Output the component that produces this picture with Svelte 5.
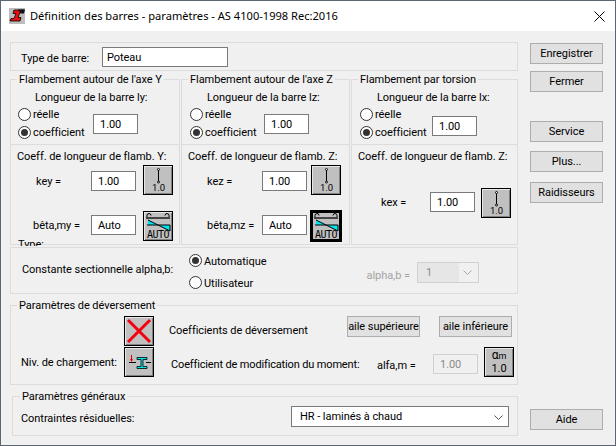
<script>
  const sideTop = ['Enregistrer', 'Fermer'];
  const sideMid = ['Service', 'Plus...', 'Raidisseurs'];
</script>

{#snippet kIcon()}
  <svg width="28" height="28" viewBox="0 0 28 28" aria-hidden="true">
    <g fill="none" stroke="#000">
      <path d="M14.5 4V16" />
      <circle cx="14.5" cy="3.5" r="1" fill="#fff" />
      <circle cx="14.5" cy="16" r="1" fill="#fff" />
    </g>
  </svg>
  <span class="k-num">1.0</span>
{/snippet}

{#snippet autoIcon()}
  <svg width="28" height="28" viewBox="0 0 28 28" aria-hidden="true">
    <g fill="none" stroke="#000">
      <path d="M2 6H26" stroke-width="1.3" />
      <path d="M3 5V3.5A2 2 0 0 1 7 3.5" />
      <path d="M21 3.5A2 2 0 0 1 25 3.5V5" />
    </g>
    <path d="M4 8V13H15Z M15 13H26V19Z" fill="#00e5ee" />
    <path d="M4 8L26 19V13H3" stroke="#000" fill="none" />
  </svg>
  <span class="auto-num">AUTO</span>
{/snippet}

<div class="window">
  <header class="titlebar">
    <svg class="logo" width="18" height="16" viewBox="0 0 18 16" aria-hidden="true">
      <rect width="16" height="16" fill="#bdbdbd" />
      <path d="M5 2H15L14 4.5H11L9 9.5L12 9.5L11 13H1L2 10.5H5L7 5.5H4Z" fill="#e81010" stroke="#000" stroke-width=".8" />
      <path d="M9 1.5L16 1.5L15 5.5L11.5 5.5" fill="#111" />
    </svg>
    <span class="title">Définition des barres - paramètres - AS 4100-1998 Rec:2016</span>
    <svg class="close" width="11" height="11" viewBox="0 0 11 11" aria-hidden="true">
      <path d="M.5.5L10.5 10.5M10.5.5L.5 10.5" stroke="#000" fill="none" />
    </svg>
  </header>

  <div class="content">
    <main class="main">
      <section class="box g-type">
        <span class="type-label">Type de barre:</span>
        <input class="field type-field" value="Poteau" readonly />
      </section>

      <section class="g-buck">
        <div class="col">
          <div class="box upper">
            <span class="legend">Flambement autour de l'axe Y</span>
            <div class="len len-a">Longueur de la barre ly:</div>
            <div class="choice ch-a">
              <div class="radios">
                <label class="radio"><i></i>réelle</label>
                <label class="radio on"><i></i>coefficient</label>
              </div>
              <input class="field num num-a" value="1.00" readonly />
            </div>
          </div>
          <div class="box lower">
            <div class="coef-title">Coeff. de longueur de flamb. Y:</div>
            <div class="krow">
              <span class="lbl l-key">key =</span>
              <input class="field num" value="1.00" readonly />
              <span class="tool k">{@render kIcon()}</span>
            </div>
            <div class="brow">
              <span class="lbl l-beta">bêta,my =</span>
              <input class="field num" value="Auto" readonly />
              <span class="tool auto">{@render autoIcon()}</span>
            </div>
          </div>
        </div>

        <div class="col">
          <div class="box upper">
            <span class="legend l2">Flambement autour de l'axe Z</span>
            <div class="len len-b">Longueur de la barre lz:</div>
            <div class="choice ch-b">
              <div class="radios">
                <label class="radio"><i></i>réelle</label>
                <label class="radio on"><i></i>coefficient</label>
              </div>
              <input class="field num num-b" value="1.00" readonly />
            </div>
          </div>
          <div class="box lower">
            <div class="coef-title">Coeff. de longueur de flamb. Z:</div>
            <div class="krow">
              <span class="lbl l-kez">kez =</span>
              <input class="field num" value="1.00" readonly />
              <span class="tool k k2">{@render kIcon()}</span>
            </div>
            <div class="brow b2">
              <span class="lbl l-betz">bêta,mz =</span>
              <input class="field num" value="Auto" readonly />
              <span class="tool auto focus">{@render autoIcon()}</span>
            </div>
          </div>
        </div>

        <div class="col">
          <div class="box upper">
            <span class="legend l2">Flambement par torsion</span>
            <div class="len len-c">Longueur de la barre lx:</div>
            <div class="choice ch-c">
              <div class="radios">
                <label class="radio"><i></i>réelle</label>
                <label class="radio on"><i></i>coefficient</label>
              </div>
              <input class="field num num-c" value="1.00" readonly />
            </div>
          </div>
          <div class="box lower">
            <div class="coef-title">Coeff. de longueur de flamb. Z:</div>
            <div class="krow kx">
              <span class="lbl l-kex">kex =</span>
              <input class="field num" value="1.00" readonly />
              <span class="tool k k3">{@render kIcon()}</span>
            </div>
          </div>
        </div>
      </section>

      <section class="box g-sect">
        <span class="type-over">Type:</span>
        <span class="sect-label">Constante sectionnelle alpha,b:</span>
        <div class="radios sect-radios">
          <label class="radio on tall"><i></i>Automatique</label>
          <label class="radio tall"><i></i>Utilisateur</label>
        </div>
        <span class="alpha-label">alpha,b =</span>
        <div class="dis-select">
          <span class="dis-value">1</span>
          <svg width="9" height="5" viewBox="0 0 9 5" aria-hidden="true"><path d="M.5.5L4.5 4.5L8.5.5" fill="none" stroke="#a6a6a6" /></svg>
        </div>
      </section>

      <section class="box g-dev">
        <span class="legend">Paramètres de déversement</span>
        <div class="dev-row first">
          <span class="tool cross">
            <svg width="28" height="28" viewBox="0 0 28 28" aria-hidden="true"><path d="M3 3L25 25M25 3L3 25" stroke="#f5000f" stroke-width="3" fill="none" /></svg>
          </span>
          <span class="coef-dev">Coefficients de déversement</span>
          <button class="btn wing w1">aile supérieure</button>
          <button class="btn wing w2">aile inférieure</button>
        </div>
        <div class="dev-row">
          <span class="niv">Niv. de chargement:</span>
          <span class="tool beam">
            <svg width="28" height="28" viewBox="0 0 28 28" aria-hidden="true">
              <path d="M4 14.5H11M21 14.5H26" stroke="#000" fill="none" />
              <path d="M6.5 7V12" stroke="#e00000" fill="none" />
              <path d="M5 11L6.5 14L8 11Z" fill="#e00000" />
              <path d="M12 9.5H22V11.5H18V18.5H22V20.5H12V18.5H16V11.5H12Z" fill="#00e5ee" stroke="#000" stroke-width=".8" />
            </svg>
          </span>
          <span class="mod">Coefficient de modification du moment:</span>
          <span class="alfa">alfa,m =</span>
          <input class="field num off" value="1.00" readonly />
          <span class="tool am"><span class="am-top">α<small>m</small></span><span class="am-bot">1.0</span></span>
        </div>
      </section>

      <section class="box g-gen">
        <span class="legend l3">Paramètres généraux</span>
        <span class="res">Contraintes résiduelles:</span>
        <div class="select">
          <span>HR - laminés à chaud</span>
          <svg width="9" height="5" viewBox="0 0 9 5" aria-hidden="true"><path d="M.5.5L4.5 4.5L8.5.5" fill="none" stroke="#555" /></svg>
        </div>
      </section>
    </main>

    <aside class="side">
      {#each sideTop as b}<button class="btn sbtn">{b}</button>{/each}
      <div class="gap"></div>
      {#each sideMid as b}<button class="btn sbtn">{b}</button>{/each}
      <button class="btn sbtn help">Aide</button>
    </aside>
  </div>
</div>

<style>
  :global(body) { margin: 0; }
  .window {
    width: 616px; height: 446px; box-sizing: border-box;
    border: 1px solid #5b6675; background: #f0f0f0;
    display: flex; flex-direction: column;
    font: 11px/14px Roboto, "Noto Sans", sans-serif; letter-spacing: -.05px;
    color: #000; overflow: hidden;
  }
  .titlebar { height: 30px; background: #fff; display: flex; align-items: center; flex: none; }
  .logo { margin-left: 8px; }
  .title { margin-left: 3px; font: 11.1px/14px "Noto Sans", sans-serif; letter-spacing: 0; }
  .close { margin-left: auto; margin-right: 10px; }
  .content { flex: 1; display: flex; min-height: 0; }
  .main { margin-left: 9px; width: 508px; padding-top: 11px; flex: none; }
  .box { border: 1px solid #dcdcdc; box-sizing: border-box; position: relative; }
  .legend {
    position: absolute; left: 6px; top: -7px; padding: 0 2px; background: #f0f0f0; white-space: nowrap;
  }
  .l2 { left: 6px; }
  .l3 { left: 7px; }
  .field {
    box-sizing: border-box; border: 1px solid #7a7a7a; background: #fff; margin: 0;
    font: inherit; letter-spacing: inherit; color: #000; padding: 1px 6px 0; outline: none; display: block;
  }
  .num { width: 45px; height: 20px; }
  .g-type { height: 29px; display: flex; align-items: flex-start; }
  .type-label { margin-left: 10px; width: 81px; margin-top: 9px; }
  .type-field { width: 126px; height: 20px; margin-top: 4px; padding: 0 4px; }
  .g-buck { margin-top: 8px; display: grid; grid-template-columns: 170px 169px 167px; column-gap: 1px; }
  .col { display: flex; flex-direction: column; }
  .upper { height: 66px; padding-top: 11px; }
  .lower { height: 100px; border-top: 0; padding-top: 5px; }
  .len { white-space: nowrap; }
  .len-a { margin-left: 24px; }
  .len-b { margin-left: 25px; }
  .len-c { margin-left: 25px; }
  .choice { display: flex; margin-top: 1px; }
  .ch-a { margin-left: 7px; }
  .ch-b { margin-left: 8px; }
  .ch-c { margin-left: 8px; }
  .radios { display: flex; flex-direction: column; width: 74px; flex: none; }
  .radio { display: flex; align-items: center; height: 18px; white-space: nowrap; box-sizing: content-box; padding-top: 2px; margin-top: -2px; }
  .radio i {
    width: 13px; height: 13px; border-radius: 50%; border: 1px solid #333; background: #fff;
    box-sizing: border-box; margin-right: 2px; margin-top: -2px; display: grid; place-items: center; flex: none;
  }
  .radio.on i::after { content: ""; width: 7px; height: 7px; border-radius: 50%; background: #333; }
  .num-a { margin: 8px 0 0 1px; }
  .num-b { margin: 8px 0 0 0; }
  .num-c { margin: 10px 0 0 -2px; }
  .coef-title { margin-left: 6px; white-space: nowrap; height: 14px; }
  .lbl { white-space: nowrap; display: block; flex: none; }
  .krow { display: flex; align-items: flex-start; margin-top: 1px; height: 30px; }
  .krow .field { margin-top: 6px; }
  .krow .lbl { line-height: 20px; margin-top: 7px; }
  .brow { display: flex; align-items: flex-start; margin-top: 16px; }
  .brow .lbl { line-height: 20px; margin-top: 5px; }
  .brow .field { margin-top: 4px; }
  .l-key { margin-left: 25px; width: 55px; }
  .l-beta { margin-left: 22px; width: 58px; }
  .l-kez { margin-left: 25px; width: 55px; }
  .l-betz { margin-left: 25px; width: 55px; }
  .krow.kx { margin-top: 24px; }
  .krow.kx .field { margin-top: 4px; }
  .krow.kx .lbl { margin-top: 5px; }
  .l-kex { margin-left: 29px; width: 49px; }
  .tool {
    width: 30px; height: 30px; box-sizing: border-box; background: #c0c0c0; flex: none;
    border: 1px solid #000; box-shadow: inset 1px 1px 0 #e6e6e6, inset -1px -1px 0 #808080;
    position: relative; display: block; overflow: hidden;
  }
  .tool svg { display: block; }
  .k { margin-left: 7px; }
  .k2 { margin-left: 4px; }
  .k3 { margin-left: 6px; }
  .k-num { position: absolute; left: 1px; right: 0; bottom: 1px; text-align: center; font-size: 9.5px; line-height: 10px; }
  .auto { margin-left: 7px; }
  .focus { width: 32px; height: 32px; border-width: 2px; margin-left: 3px; margin-top: -1px; box-shadow: inset 0 0 0 1px #000; }
  .auto-num { position: absolute; left: 0; right: 0; bottom: 0; text-align: center; font: 10px/10px "DejaVu Sans Mono", monospace; letter-spacing: -.5px; }
  .g-sect { margin-top: 2px; height: 47px; display: flex; align-items: center; }
  .type-over { position: absolute; left: 7px; top: -10px; height: 8px; overflow: hidden; line-height: 13px; }
  .sect-label { margin-left: 11px; width: 167px; white-space: nowrap; margin-top: -1px; }
  .sect-radios { margin-top: 4px; }
  .tall { height: 22px; }
  .alpha-label { margin-left: auto; color: #a3a3a3; margin-top: 11px; }
  .dis-select {
    width: 62px; height: 21px; box-sizing: border-box; border: 1px solid #d0d0d0; margin: 11px 38px 7px 7px;
    display: flex; align-items: center; background: linear-gradient(to right, #e6e6e6 41px, #f0f0f0 41px);
    color: #8a8a8a; padding: 0 6px 0 8px; justify-content: space-between;
  }
  .g-dev { margin-top: 11px; height: 80px; padding-top: 10px; }
  .dev-row { display: flex; align-items: center; height: 31px; }
  .dev-row.first { align-items: flex-start; height: 31px; }
  .first .tool { margin-left: 113px; }
  .coef-dev { margin-left: 15px; width: 178px; white-space: nowrap; margin-top: 8px; }
  .btn {
    box-sizing: border-box; border: 1px solid #adadad; background: #e1e1e1; padding: 0; margin: 0;
    font: inherit; letter-spacing: inherit; color: #000; white-space: nowrap; display: block; overflow: hidden;
  }
  .wing { width: 73px; height: 21px; }
  .w2 { margin-left: 19px; }
  .niv { margin-left: 10px; width: 103px; white-space: nowrap; margin-top: 1px; }
  .beam { align-self: flex-start; }
  .mod { margin-left: 17px; width: 206px; white-space: nowrap; margin-top: 5px; letter-spacing: -.15px; }
  .alfa { white-space: nowrap; width: 56px; margin-top: 6px; }
  .off { border-color: #d0d0d0; background: #f0f0f0; color: #8a8a8a; margin-top: 2px; width: 45px; }
  .am {
    margin-left: 6px; align-self: flex-start; text-align: center;
    display: flex; flex-direction: column; font-size: 11px;
  }
  .am-top { display: block; height: 14px; line-height: 14px; font-size: 12px; }
  .am-bot { display: block; height: 13px; line-height: 13px; }
  .am-top small { font-size: 9px; }
  .g-gen { margin-top: 11px; margin-left: 2px; width: 506px; height: 40px; display: flex; align-items: flex-start; }
  .res { margin-left: 8px; width: 270px; white-space: nowrap; margin-top: 15px; }
  .select {
    box-sizing: border-box; width: 218px; height: 21px; border: 1px solid #7a7a7a; background: #fff;
    display: flex; align-items: center; justify-content: space-between; padding: 1px 5px 0 8px; margin-top: 9px;
  }
  .side { margin-left: 12px; width: 73px; padding: 12px 0 15px; display: flex; flex-direction: column; gap: 7px; box-sizing: border-box; }
  .sbtn { width: 73px; height: 21px; flex: none; }
  .gap { height: 15px; flex: none; }
  .side .sbtn:nth-of-type(4) { margin-top: 2px; }
  .side .sbtn:nth-of-type(5) { margin-top: 3px; }
  .help { margin-top: auto !important; }
</style>
